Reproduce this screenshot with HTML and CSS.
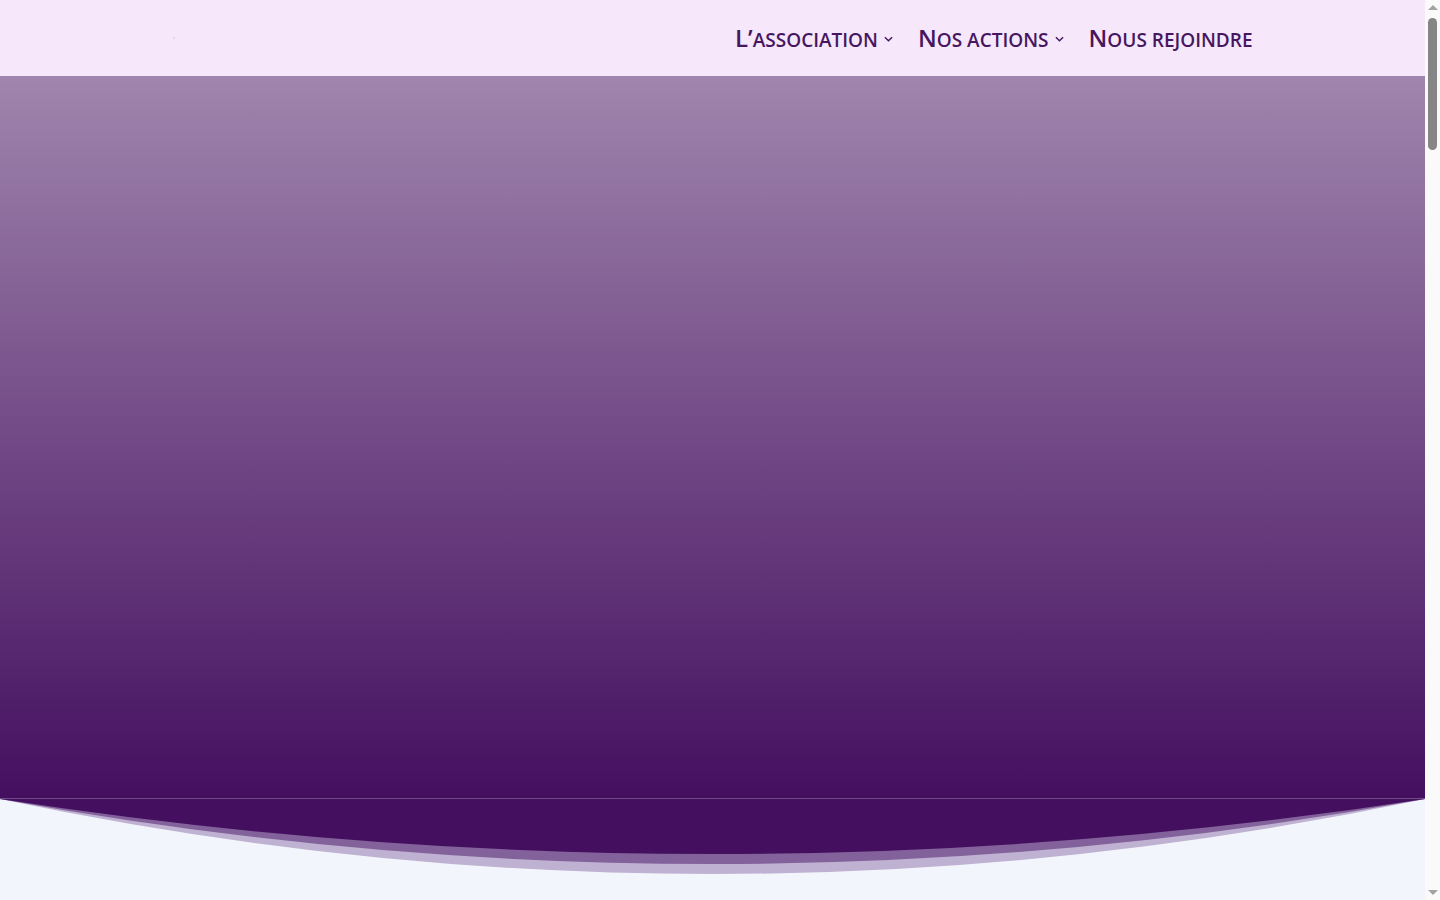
FILE: index.html
```html
<!DOCTYPE html>
<html lang="fr">
<head>
<meta charset="utf-8">
<title>Association</title>
<link rel="stylesheet" href="styles.css">
</head>
<body>
<div class="page">
  <header class="site-header">
    <div class="header-inner">
      <a class="logo" href="#"><span class="logo-dot"></span></a>
      <nav class="top-menu">
        <a class="menu-item" href="#"><span class="label"><span class="cap">L’</span>association</span><svg class="chev" viewBox="0 0 10 6" width="9" height="6"><path d="M1 1l4 4 4-4" fill="none" stroke="currentColor" stroke-width="1.6"/></svg></a>
        <a class="menu-item" href="#"><span class="label"><span class="cap">N</span>os actions</span><svg class="chev" viewBox="0 0 10 6" width="9" height="6"><path d="M1 1l4 4 4-4" fill="none" stroke="currentColor" stroke-width="1.6"/></svg></a>
        <a class="menu-item" href="#"><span class="label"><span class="cap">N</span>ous rejoindre</span></a>
      </nav>
    </div>
  </header>
  <main>
    <section class="hero"></section>
    <div class="divider">
      <svg class="divider-svg" viewBox="0 0 1425 80" preserveAspectRatio="none">
        <path d="M0 0 Q712.5 150 1425 0 Z" fill="#bfb1d1"/>
        <path d="M0 0 Q712.5 130 1425 0 Z" fill="#83619b"/>
        <path d="M0 0 Q712.5 110 1425 0 Z" fill="#440f5f"/>
      </svg>
    </div>
    <section class="content"></section>
  </main>
</div>
<div class="scrollbar" aria-hidden="true">
  <span class="sb-arrow sb-up"></span>
  <span class="sb-track"><span class="sb-thumb"></span></span>
  <span class="sb-arrow sb-down"></span>
</div>
</body>
</html>
```
FILE: styles.css
```css
html, body {
  margin: 0;
  padding: 0;
  height: 100%;
  overflow: hidden;
}
body {
  background: #f3f5fc;
  font-family: "Open Sans", "Noto Sans", sans-serif;
}
.page {
  margin-right: 15px;
}
.site-header {
  height: 76px;
  background: #f6e8fa;
}
.header-inner {
  max-width: 1080px;
  height: 100%;
  margin: 0 auto;
  display: flex;
  align-items: center;
  justify-content: space-between;
}
.logo {
  display: flex;
  align-items: center;
  height: 20px;
}
.logo-dot {
  width: 2px;
  height: 2px;
  background: #e6d6ee;
}
.top-menu {
  display: flex;
  align-items: center;
  gap: 25px;
}
.menu-item {
  display: flex;
  align-items: center;
  gap: 6px;
  color: #461760;
  text-decoration: none;
  font-weight: 600;
  line-height: 1;
}
.label {
  font-size: 19px;
  text-transform: uppercase;
  white-space: nowrap;
}
.cap {
  font-size: 24px;
}
.chev {
  display: block;
  margin-top: 1px;
}
.hero {
  height: 722px;
  background: linear-gradient(to bottom, #a085ad 0%, #440f5f 100%);
  border-bottom: 1px solid #6d4d83;
}
.divider {
  height: 80px;
  line-height: 0;
}
.divider-svg {
  display: block;
  width: 100%;
  height: 80px;
}
.content {
  height: 200px;
}
.scrollbar {
  position: fixed;
  top: 0;
  right: 0;
  width: 15px;
  height: 100vh;
  background: #fafafa;
  display: flex;
  flex-direction: column;
  align-items: center;
}
.sb-arrow {
  width: 0;
  height: 0;
  border-left: 5px solid transparent;
  border-right: 5px solid transparent;
  flex: none;
}
.sb-up {
  margin-top: 5px;
  border-bottom: 5px solid #a3a3a3;
}
.sb-down {
  margin-bottom: 5px;
  border-top: 5px solid #a3a3a3;
}
.sb-track {
  flex: 1;
  width: 100%;
  display: flex;
  justify-content: center;
  padding-top: 8px;
}
.sb-thumb {
  width: 9px;
  height: 132px;
  border-radius: 5px;
  background: #858585;
}
```
